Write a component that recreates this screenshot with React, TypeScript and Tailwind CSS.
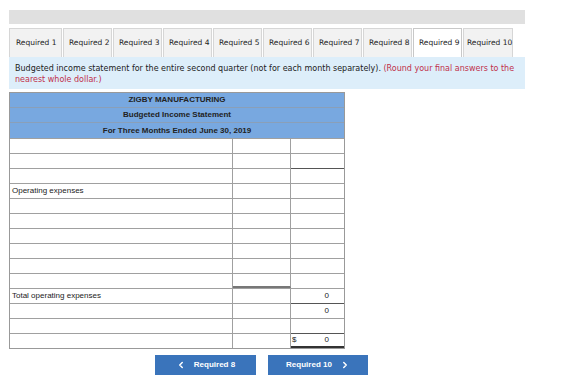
import React from 'react';
import { ChevronLeft, ChevronRight } from 'lucide-react';

const TABS = ['Required 1', 'Required 2', 'Required 3', 'Required 4', 'Required 5', 'Required 6', 'Required 7', 'Required 8', 'Required 9', 'Required 10'];
const ACTIVE_TAB = 'Required 9';

type Row = {
  label?: string;
  val?: string;
  dollar?: boolean;
  midBottom?: boolean; // underline under the middle column
  valTop?: boolean; // rule above the right column
  valDouble?: boolean;
};

const ROWS: Row[] = [
  {},
  {},
  { valTop: true },
  { label: 'Operating expenses' },
  {},
  {},
  {},
  {},
  {},
  { midBottom: true },
  { label: 'Total operating expenses', val: '0' },
  { val: '0', valTop: true },
  {},
  { val: '0', dollar: true, valTop: true, valDouble: true },
];

export default function App() {
  return (
    <div className="min-h-screen bg-white pl-[9px] pt-[10px] font-['DejaVu_Sans',Verdana,sans-serif]">
      <div className="w-[516px]">
        {/* top bar */}
        <div className="h-[14px] bg-[#e0e0e0]" />

        {/* tabs */}
        <div className="mt-[4px] flex gap-[1px]">
          {TABS.map(t => (
            <div
              key={t}
              className={`flex h-[29px] items-center whitespace-nowrap border border-b-0 text-[7.5px] text-[#222] ${
                t === ACTIVE_TAB ? 'bg-white border-[#c8c8c8]' : 'bg-[#f2f2f2] border-[#d6d6d6]'
              } ${t === 'Required 1' ? 'w-[53px] pl-[6px]' : t === 'Required 10' ? 'w-[50px] pl-[3px]' : 'w-[49px] pl-[5px]'}`}
            >
              {t}
            </div>
          ))}
        </div>

        {/* instructions */}
        <div className="h-[32px] bg-[#ddeefa] px-[6px] pt-[6px] text-[8px] leading-[11px] whitespace-nowrap text-[#222]">
          Budgeted income statement for the entire second quarter (not for each month separately).{' '}
          <span className="text-[#c0304a]">(Round your final answers to the</span>
          <br />
          <span className="text-[#c0304a]">nearest whole dollar.)</span>
        </div>

        {/* statement table */}
        <div className="mt-[3px] w-[336px] border border-[#999] font-['Liberation_Sans',Arial,sans-serif] text-[#222]">
          {['ZIGBY MANUFACTURING', 'Budgeted Income Statement', 'For Three Months Ended June 30, 2019'].map((h, i) => (
            <div
              key={h}
              className={`flex h-[15px] items-center justify-center bg-[#78a8e0] text-[8px] font-bold ${i < 2 ? 'border-b border-[#8a9fb8]' : ''}`}
            >
              {h}
            </div>
          ))}
          {ROWS.map((r, i) => (
            <div key={i} className="flex h-[15px] border-t border-[#a0a0a0] text-[8px]">
              <div className="flex w-[223px] items-center border-r border-[#a0a0a0] pl-[2px]">{r.label}</div>
              <div className={`w-[58px] border-r border-[#a0a0a0] ${r.midBottom ? 'border-b-2 border-b-[#777]' : ''}`} />
              <div
                className={`relative flex flex-1 items-center justify-end pr-[15px] ${r.valTop ? 'border-t-[1.5px] border-t-[#555] -mt-[1px]' : ''} ${
                  r.valDouble ? 'border-b-2 border-b-[#333]' : ''
                }`}
              >
                {r.dollar && <span className="absolute left-[1px]">$</span>}
                {r.val}
              </div>
            </div>
          ))}
        </div>

        {/* navigation buttons */}
        <div className="mt-[6px] flex gap-[12px] pl-[146px] font-['Liberation_Sans',Arial,sans-serif]">
          <button className="flex h-[20px] w-[101px] items-center justify-center gap-[8px] bg-[#3a74bb] text-[8px] font-bold text-white">
            <ChevronLeft size={10} strokeWidth={3.5} />
            Required 8
          </button>
          <button className="flex h-[20px] w-[100px] items-center justify-center gap-[8px] bg-[#3a74bb] text-[8px] font-bold text-white">
            Required 10
            <ChevronRight size={10} strokeWidth={3.5} />
          </button>
        </div>
      </div>
    </div>
  );
}
